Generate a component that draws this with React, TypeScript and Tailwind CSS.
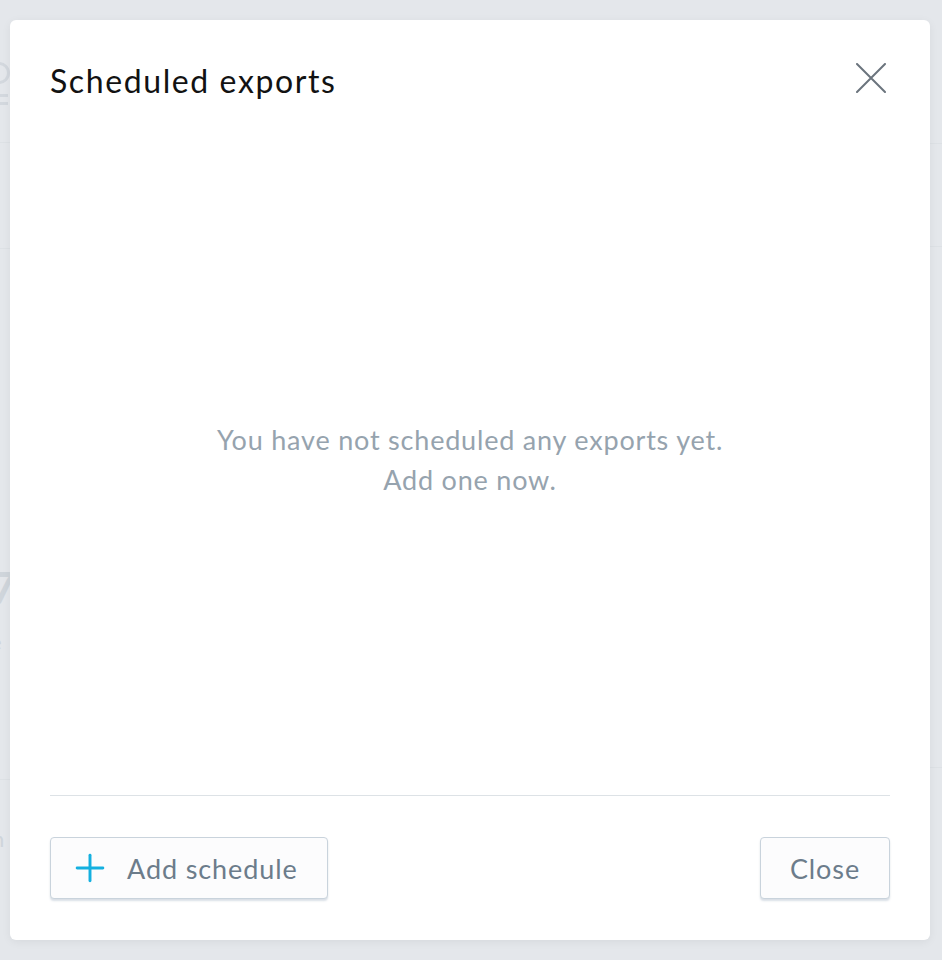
import { Plus } from "lucide-react";

/* ─── Faint page behind the overlay ─── */
function Backdrop() {
  return (
    <div className="flex h-[960px] w-full justify-between bg-[#e4e7eb] overflow-hidden" aria-hidden>
      <div className="flex w-[40px] flex-col pt-[62px] text-[#cfd5db]">
        <div className="h-[22px] w-[22px] -ml-[12px] rounded-full border-[3px] border-[#d3d8de]" />
        <div className="mt-[10px] h-[3px] w-[8px] bg-[#d3d8de]" />
        <div className="mt-[5px] h-[3px] w-[8px] bg-[#d3d8de]" />
        <div className="mt-[37px] h-px w-full bg-[#dde1e5]" />
        <div className="mt-[105px] h-px w-full bg-[#dde1e5]" />
        <div className="mt-[124px] -ml-[14px] text-[28px] font-bold leading-[28px]">a</div>
        <div className="mt-[164px] -ml-[10px] text-[44px] font-bold leading-none">7</div>
        <div className="mt-[22px] -ml-[10px] text-[22px] leading-none">e</div>
        <div className="mt-[126px] h-px w-full bg-[#dde1e5]" />
        <div className="mt-[48px] -ml-[8px] text-[22px] leading-none">n</div>
      </div>
      <div className="flex w-[20px] flex-col pt-[143px]">
        <div className="h-px w-full bg-[#dde1e5]" />
        <div className="mt-[102px] h-px w-full bg-[#dde1e5]" />
        <div className="mt-[520px] h-px w-full bg-[#dde1e5]" />
      </div>
    </div>
  );
}

export default function App() {
  return (
    <div className="relative h-[960px] w-[942px] overflow-hidden" style={{ fontFamily: "Lato, 'Noto Sans', sans-serif" }}>
      <Backdrop />
      <div className="absolute left-[10px] top-[20px] flex h-[920px] w-[920px] flex-col rounded-[6px] bg-white shadow-[0_2px_10px_rgba(0,0,0,0.06)]">
        <div className="flex items-start justify-between pl-[40px] pr-[44px] pt-[39px]">
          <h1 className="text-[32px] leading-[44px] tracking-[1.6px] text-[#121212]">Scheduled exports</h1>
          <button type="button" className="mt-[4px] text-[#6b747d]">
            <svg width="30" height="30" viewBox="0 0 30 30" fill="none" stroke="currentColor" strokeWidth="2" strokeLinecap="round">
              <path d="M1 1L29 29M29 1L1 29" />
            </svg>
          </button>
        </div>

        <div className="flex flex-1 flex-col items-center justify-center pt-[22px] text-center text-[27px] leading-[40px] tracking-[0.8px] text-[#96a3ae]">
          <p>You have not scheduled any exports yet.</p>
          <p>Add one now.</p>
        </div>

        <div className="mx-[40px] h-px bg-[#dde2e6]" />

        <div className="flex items-center justify-between px-[40px] pb-[41px] pt-[41px]">
          <button
            type="button"
            className="flex h-[62px] w-[278px] items-center gap-[15px] rounded-[4px] border border-[#c9d3dc] bg-[#fcfcfd] pl-[17px] text-[27px] tracking-[0.9px] text-[#6c7c8b] shadow-[0_2px_2px_rgba(170,185,200,0.45)]"
          >
            <Plus size={44} strokeWidth={1.6} className="text-[#14b0e0]" />
            <span className="pt-[3px]">Add schedule</span>
          </button>
          <button
            type="button"
            className="flex h-[62px] w-[130px] items-center justify-center rounded-[4px] border border-[#c9d3dc] bg-[#fcfcfd] pt-[3px] text-[27px] tracking-[0.9px] text-[#6c7c8b] shadow-[0_2px_2px_rgba(170,185,200,0.45)]"
          >
            Close
          </button>
        </div>
      </div>
    </div>
  );
}
